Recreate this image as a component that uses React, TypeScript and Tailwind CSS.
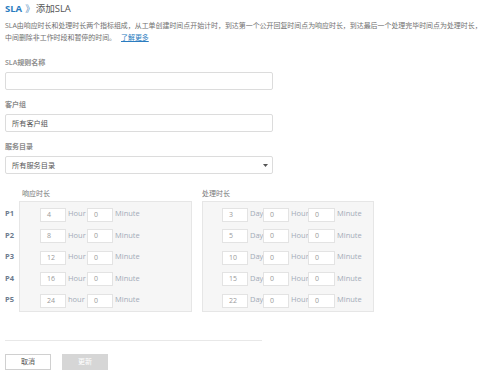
import React from "react";

const resp = [
  { p: "P1", h: "4", unit: "Hour" },
  { p: "P2", h: "8", unit: "Hour" },
  { p: "P3", h: "12", unit: "Hour" },
  { p: "P4", h: "16", unit: "Hour" },
  { p: "P5", h: "24", unit: "hour" },
];
const handle = ["3", "5", "10", "15", "22"];

const font = { fontFamily: '"Open Sans", "Noto Sans CJK SC", sans-serif' };

function NumBox({ value, w = "w-[26px]" }: { value: string; w?: string }) {
  return (
    <div className={`${w} h-[14px] bg-white border border-[#e3e3e3] flex items-center pl-[6px] text-[7px] text-[#9a9a9a]`}>
      {value}
    </div>
  );
}

function Unit({ children, w }: { children: React.ReactNode; w: string }) {
  return <span className={`${w} pl-[2px] mb-[3px] text-[7.5px] leading-[10px] text-[#a3abb8]`}>{children}</span>;
}

export default function App() {
  return (
    <div className="bg-white w-[491px] h-[376px] px-[5px] pt-[2px] text-[#555]" style={font}>
      <div className="h-[14px] leading-[14px] text-[9.5px] flex items-center whitespace-nowrap">
        <span className="font-bold text-[#2b7cc0]">SLA</span>
        <span className="text-[#5b8fc0] ml-[3px]">》</span>
        <span className="text-[#555] ml-[1px]">添加SLA</span>
      </div>

      <div className="mt-[4px] text-[6.95px] leading-[12px] text-[#707070] whitespace-nowrap">
        <div>SLA由响应时长和处理时长两个指标组成，从工单创建时间点开始计时，到达第一个公开回复时间点为响应时长，到达最后一个处理完毕时间点为处理时长，</div>
        <div>
          中间删除非工作时段和暂停的时间。
          <span className="ml-[5px] text-[#2b7cc0] underline">了解更多</span>
        </div>
      </div>

      <div className="mt-[14px] h-[10px] leading-[10px] text-[7px] font-semibold text-[#8c8c8c]">SLA规则名称</div>
      <div className="mt-[4px] w-[268px] h-[18px] border border-[#dcdcdc] rounded-[2px]" />

      <div className="mt-[10px] h-[10px] leading-[10px] text-[7px] font-semibold text-[#8c8c8c]">客户组</div>
      <div className="mt-[4px] w-[268px] h-[18px] border border-[#dcdcdc] rounded-[2px] flex items-center pl-[6px] text-[7.2px] text-[#555]">
        所有客户组
      </div>

      <div className="mt-[10px] h-[10px] leading-[10px] text-[7px] font-semibold text-[#8c8c8c]">服务目录</div>
      <div className="mt-[4px] w-[268px] h-[18px] border border-[#dcdcdc] rounded-[2px] flex items-center justify-between pl-[6px] pr-[4px] text-[7.2px] text-[#555]">
        <span>所有服务目录</span>
        <svg width="5" height="3" viewBox="0 0 5 3">
          <path d="M0 0 L5 0 L2.5 3 Z" fill="#555" />
        </svg>
      </div>

      <div className="mt-[15px] flex">
        <div className="w-[14px] pt-[14px] flex flex-col">
          {resp.map((r) => (
            <div key={r.p} className="h-[21.5px] flex items-center text-[7.5px] font-bold text-[#6b7b8e]">
              {r.p}
            </div>
          ))}
        </div>

        <div className="w-[173px]">
          <div className="h-[10px] leading-[10px] pl-[3px] text-[7px] text-[#777] mb-[2px]">响应时长</div>
          <div className="h-[111px] bg-[#f6f6f6] border border-[#e6e6e6] pl-[20px] pt-[2px]">
            {resp.map((r) => (
              <div key={r.p} className="h-[21.5px] flex items-center">
                <NumBox value={r.h} />
                <Unit w="w-[21px]">{r.unit}</Unit>
                <NumBox value="0" />
                <Unit w="w-[30px]">Minute</Unit>
              </div>
            ))}
          </div>
        </div>

        <div className="w-[172px] ml-[10px]">
          <div className="h-[10px] leading-[10px] text-[7px] text-[#777] mb-[2px]">处理时长</div>
          <div className="h-[111px] bg-[#f6f6f6] border border-[#e6e6e6] pl-[19px] pt-[2px]">
            {handle.map((d) => (
              <div key={d} className="h-[21.5px] flex items-center">
                <NumBox value={d} />
                <Unit w="w-[15px]">Day</Unit>
                <NumBox value="0" />
                <Unit w="w-[19px]">Hour</Unit>
                <NumBox value="0" w="w-[27px]" />
                <Unit w="w-[30px]">Minute</Unit>
              </div>
            ))}
          </div>
        </div>
      </div>

      <div className="mt-[28px] w-[257px] h-px bg-[#e8e8e8]" />

      <div className="mt-[13px] flex gap-[11px]">
        <div className="w-[46px] h-[16px] border border-[#d0d0d0] bg-white flex items-center justify-center text-[7px] text-[#555]">
          取消
        </div>
        <div className="w-[46px] h-[16px] bg-[#d6d6d6] flex items-center justify-center text-[7px] text-white">
          更新
        </div>
      </div>
    </div>
  );
}
